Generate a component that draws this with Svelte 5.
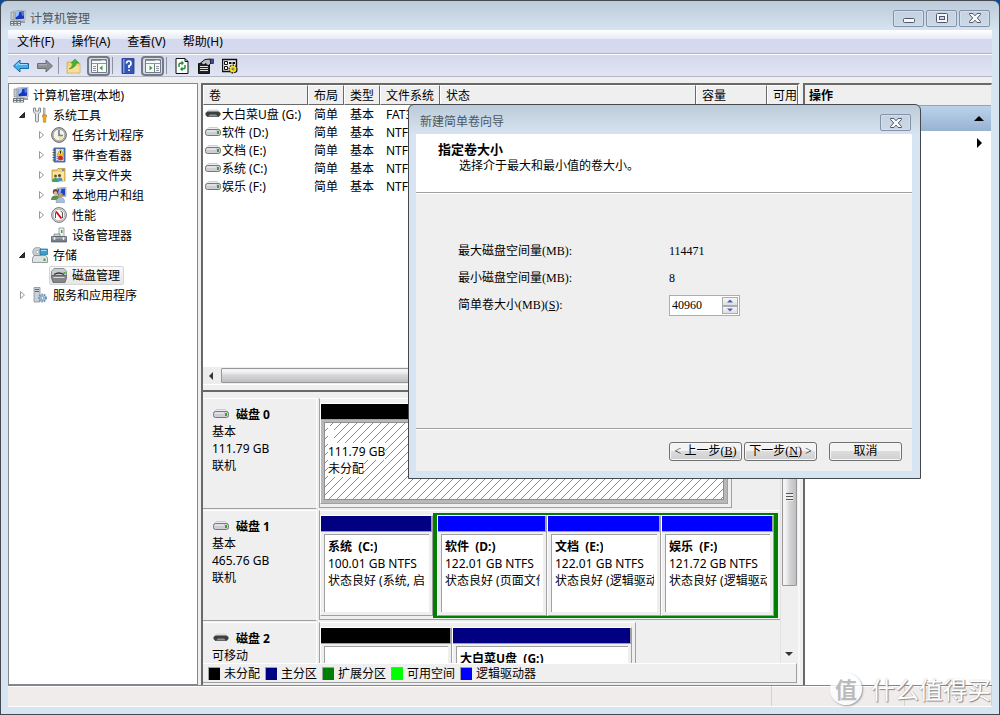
<script lang="ts">
	type TreeNode = {
		label: string;
		icon: string;
		level: number;
		state?: 'open' | 'closed';
		selected?: boolean;
	};

	type Partition = {
		kind: string;
		width: number;
		name?: string;
		size?: string;
		status?: string;
		selected?: boolean;
	};

	const menus = ['文件(F)', '操作(A)', '查看(V)', '帮助(H)'];

	const tree: TreeNode[] = [
		{ label: '计算机管理(本地)', icon: 'computer', level: 0 },
		{ label: '系统工具', icon: 'tools', level: 1, state: 'open' },
		{ label: '任务计划程序', icon: 'clock', level: 2, state: 'closed' },
		{ label: '事件查看器', icon: 'events', level: 2, state: 'closed' },
		{ label: '共享文件夹', icon: 'shared', level: 2, state: 'closed' },
		{ label: '本地用户和组', icon: 'users', level: 2, state: 'closed' },
		{ label: '性能', icon: 'gauge', level: 2, state: 'closed' },
		{ label: '设备管理器', icon: 'device', level: 2 },
		{ label: '存储', icon: 'storage', level: 1, state: 'open' },
		{ label: '磁盘管理', icon: 'disks', level: 2, selected: true },
		{ label: '服务和应用程序', icon: 'services', level: 1, state: 'closed' }
	];

	const columns = [
		{ label: '卷', key: 'name' },
		{ label: '布局', key: 'layout' },
		{ label: '类型', key: 'type' },
		{ label: '文件系统', key: 'fs' },
		{ label: '状态', key: 'status' },
		{ label: '容量', key: 'capacity' },
		{ label: '可用', key: 'free' }
	];

	const volumes = [
		{ name: '大白菜U盘 (G:)', icon: 'usb', fs: 'FAT32' },
		{ name: '软件 (D:)', icon: 'drive', fs: 'NTFS' },
		{ name: '文档 (E:)', icon: 'drive', fs: 'NTFS' },
		{ name: '系统 (C:)', icon: 'drive', fs: 'NTFS' },
		{ name: '娱乐 (F:)', icon: 'drive', fs: 'NTFS' }
	];

	const disk0: Partition[] = [
		{ kind: 'free', width: 408, size: '111.79 GB', status: '未分配', selected: true }
	];
	const disk1: Partition[] = [
		{ kind: 'primary', width: 113, name: '系统  (C:)', size: '100.01 GB NTFS', status: '状态良好 (系统, 启' }
	];
	const disk1Extended: Partition[] = [
		{ kind: 'logical', width: 110, name: '软件  (D:)', size: '122.01 GB NTFS', status: '状态良好 (页面文件' },
		{ kind: 'logical', width: 114, name: '文档  (E:)', size: '122.01 GB NTFS', status: '状态良好 (逻辑驱动' },
		{ kind: 'logical', width: 113, name: '娱乐  (F:)', size: '121.72 GB NTFS', status: '状态良好 (逻辑驱动' }
	];
	const disk2: Partition[] = [
		{ kind: 'free', width: 132 },
		{ kind: 'primary', width: 180, name: '大白菜U盘  (G:)' }
	];

	const disks = [
		{ name: '磁盘 0', icon: 'drive', lines: ['基本', '111.79 GB', '联机'], parts: disk0, extended: [] },
		{ name: '磁盘 1', icon: 'drive', lines: ['基本', '465.76 GB', '联机'], parts: disk1, extended: disk1Extended },
		{ name: '磁盘 2', icon: 'usb', lines: ['可移动'], parts: disk2, extended: [] }
	];

	const legend = [
		{ kind: 'free', label: '未分配' },
		{ kind: 'primary', label: '主分区' },
		{ kind: 'extended', label: '扩展分区' },
		{ kind: 'available', label: '可用空间' },
		{ kind: 'logical', label: '逻辑驱动器' }
	];

	let size = $state(40960);
	const min = 8;
	const max = 114471;

	function step(by: number) {
		size = Math.min(max, Math.max(min, Number(size) + by));
	}
</script>

{#snippet icon(name: string)}
	<svg class="icon" viewBox="0 0 16 16" aria-hidden="true">
		{#if name === 'computer'}
			<path d="M4 1l11-1v10l-11 1z" fill="#d5d8dc" stroke="#8d949c" stroke-width=".6" />
			<path d="M5.500 2l8.500-.8v7.500l-8.500.8z" fill="#1836b8" />
			<path d="M5.500 2l4-.4-1 4-3 2z" fill="#9cc0f5" />
			<path d="M11 1.500l3-.3v4l-2 1z" fill="#4f7ae0" />
			<path d="M1 2h3v8H1z" fill="#c3c8cd" stroke="#7c838b" stroke-width=".6" />
			<path d="M0 11h11v4.500H0z" fill="#70787f" />
			<path d="M1 12.500h2m1.500 0h2m1.500 0h2M1 14.500h2m1.500 0h2m1.500 0h2" stroke="#dfe5e9" />
			<path d="M11 11h4v2h-4z" fill="#9aa1a8" />
		{:else if name === 'tools'}
			<path d="M1.500 1v4l2 2v7.500q1.500 1.500 3 0V7l2-2V1L6.700 1v3H3.500V1z" fill="#dfe3e6" stroke="#6f767c" stroke-width=".8" />
			<path d="M11.500 1h1.500v7h-1.500z" fill="#d7dadd" stroke="#777" stroke-width=".6" />
			<path d="M10.500 8h4v2l-.8 1v4q-1.200 1-2.400 0v-4l-.8-1z" fill="#f0a818" stroke="#b87408" stroke-width=".6" />
		{:else if name === 'clock'}
			<circle cx="8" cy="8" r="7.400" fill="#b5b5b5" stroke="#6e6e6e" />
			<circle cx="8" cy="8" r="5.800" fill="#fbf3dc" stroke="#8e8e8e" stroke-width=".6" />
			<path d="M8 3v5.500h4" fill="none" stroke="#2e65a8" stroke-width="1.300" />
			<path d="M8 8.500h4L11 12l-3 .8z" fill="#edd18c" opacity=".7" />
		{:else if name === 'events'}
			<path d="M3 1h11v14H3z" fill="#5b84c4" stroke="#2d4f8c" stroke-width=".8" />
			<path d="M5 2h7.500v12H5z" fill="#dde6f5" />
			<path d="M5.500 9.500h2m-2 2h2m-2 2h2" stroke="#5b84c4" />
			<path d="M1.500 3h3m-3 2.500h3m-3 2.500h3m-3 2.500h3m-3 2.500h3" stroke="#555" />
			<path d="M9.500 2l3.500 6H6z" fill="#ffd52e" stroke="#a67c00" stroke-width=".5" />
			<path d="M9.500 4v2.500" stroke="#222" />
			<circle cx="9.500" cy="11" r="2.500" fill="#d22c1e" />
		{:else if name === 'shared'}
			<path d="M1 3h5l1-1.500h7V14H1z" fill="#f1cf6d" stroke="#b58b28" stroke-width=".7" />
			<path d="M2 5h11v9H2z" fill="#fbe6a0" />
			<path d="M11 3h2.500" stroke="#3b82c4" stroke-width="1.500" />
			<circle cx="4.500" cy="9" r="1.500" fill="#7b5130" />
			<circle cx="8.500" cy="8.500" r="1.500" fill="#5e432d" />
			<path d="M1 15q0-4 3.500-4t3.500 4z" fill="#37a46a" />
			<path d="M6 14q0-3.500 2.800-3.500t2.700 3.500z" fill="#5090c8" />
		{:else if name === 'users'}
			<path d="M6 1l9-.6v9l-9 .6z" fill="#c8ced6" stroke="#8b929a" stroke-width=".6" />
			<path d="M7 2l7-.4v6.800l-7 .4z" fill="#2146c4" />
			<path d="M8 2l2.500-.1-1 4L7 7z" fill="#8fb4f3" />
			<circle cx="4.500" cy="4.800" r="2.700" fill="#7a4b27" />
			<circle cx="4.500" cy="5.800" r="1.600" fill="#e8b98c" />
			<path d="M0 13q0-4.500 4.500-4.500T9 13z" fill="#5b8f4c" />
			<circle cx="9.500" cy="8" r="2.300" fill="#c99a58" />
			<path d="M5 15.500q0-5 4.300-5t4.200 5z" fill="#a9bfd8" stroke="#6782a2" stroke-width=".5" />
		{:else if name === 'gauge'}
			<circle cx="8" cy="8" r="7.400" fill="#d9d9d9" stroke="#777" />
			<circle cx="8" cy="8" r="5.700" fill="#fff" stroke="#999" stroke-width=".6" />
			<path d="M4.500 11V5.500M11.500 11V5.500L9.500 4" fill="none" stroke="#555" />
			<path d="M5 4.500l5.500 7" stroke="#d01515" stroke-width="2" />
		{:else if name === 'device'}
			<path d="M8 1h5v9H8z" fill="#edf1f2" stroke="#7c8386" stroke-width=".7" />
			<path d="M10 3h1.500v3H10z" fill="#43a047" />
			<path d="M3 7h6v3H3z" fill="#cfd5d9" stroke="#737b80" stroke-width=".7" />
			<path d="M.5 9.500h15V15H.5z" fill="#758088" stroke="#4b545a" stroke-width=".7" />
			<path d="M1 11h14" stroke="#b9c3c9" />
			<path d="M3.500 10v3m9-3v3" stroke="#e8edf0" stroke-width="1.500" />
		{:else if name === 'storage'}
			<circle cx="5.500" cy="5" r="4.800" fill="#c7cdd1" stroke="#7d858a" stroke-width=".6" />
			<circle cx="5.500" cy="5" r="1.500" fill="#fff" stroke="#8c9499" stroke-width=".6" />
			<path d="M8 2h7.500v5.500H8z" fill="#35a3d4" stroke="#1d6c94" stroke-width=".7" />
			<path d="M9 3.500h5.500" stroke="#a6def5" />
			<path d="M2 8.500h12l1.500 2.500v4.500H.5V11z" fill="#dfe2e4" stroke="#72797d" stroke-width=".7" />
			<path d="M11.500 11.500h2v2.500h-2z" fill="#3fae2a" />
		{:else if name === 'disks'}
			<path d="M3 1.500h10l2.500 3v4H.5v-4z" fill="#c9ccce" stroke="#6b6f72" stroke-width=".7" />
			<path d="M3 7.500q5-3 10 0" fill="none" stroke="#333" stroke-width="1.300" />
			<path d="M.5 8.500h15V11L14 15.500H2L.5 11z" fill="#838789" stroke="#54585a" stroke-width=".7" />
			<path d="M2.500 10.500h11" stroke="#d5d8da" />
			<path d="M12.500 5h2v1.800h-2z" fill="#3fae2a" />
		{:else if name === 'services'}
			<path d="M2 .5h6v14.500H2z" fill="#c9d2d6" stroke="#798489" stroke-width=".7" />
			<path d="M3 2.500h4M3 4.500h4" stroke="#3d7a60" />
			<circle cx="10.500" cy="11" r="3.500" fill="#a8c3de" stroke="#7193b5" stroke-width="2" stroke-dasharray="1.500 1" />
			<circle cx="10.500" cy="11" r="1.400" fill="#fff" stroke="#56789c" stroke-width=".6" />
		{:else if name === 'drive'}
			<path d="M4 3.500h8L15 6H1z" fill="#eceef0" stroke="#b4b4b8" stroke-width=".6" />
			<rect x=".5" y="5.500" width="15" height="6" rx="2" fill="#cdced3" stroke="#77777d" />
			<path d="M2 7h9" stroke="#f5f5f7" />
			<path d="M12 7h2v3h-2z" fill="#38a325" />
		{:else if name === 'usb'}
			<path d="M3.500 3.500h9l3 3H.5z" fill="#d9dbdc" />
			<path d="M.5 7l2-1.500h11l2 1.500v2l-2 2h-11l-2-2z" fill="#3c3f41" />
			<path d="M3 10.500L5 8.500h6l2 2z" fill="#8d9092" />
		{:else if name === 'back'}
			<path d="M.5 8L7 2v3.500h8.500v5H7V14z" fill="#3fb0ea" stroke="#1668a8" />
			<path d="M3 7.500L6 5v1.500h8" fill="none" stroke="#a5e0fa" />
		{:else if name === 'forward'}
			<path d="M15.500 8L9 2v3.500H.5v5H9V14z" fill="#8d8f92" stroke="#6d6f72" />
			<path d="M1.500 6.800h8.500" stroke="#b9bbbd" />
		{:else if name === 'up'}
			<path d="M1 4h5l1.500 1.500H14V15H1z" fill="#f0d27a" stroke="#c5a552" stroke-width=".7" />
			<path d="M2 8h11.500v6.500H2z" fill="#f7df98" />
			<path d="M3 11q3.500-2 4-6H5L9 1l4 4h-2.500Q9.500 10 3 11z" fill="#45b52d" stroke="#2b8318" stroke-width=".5" />
		{:else if name === 'help'}
			<path d="M2 .5h12v15H2z" fill="#3556b4" stroke="#1d3683" stroke-width=".8" />
			<path d="M3 1h1.500v14H3z" fill="#7f9be0" />
			<path d="M6.500 5.500q.2-2.500 2.300-2.500t2.200 2.200-2 2.600V10" fill="none" stroke="#fff" stroke-width="1.700" />
			<path d="M8.200 11.500h1.700v1.600H8.200z" fill="#fff" />
		{:else if name === 'pane-left' || name === 'pane-right'}
			<path d="M.5 1.500h15v13H.5z" fill="#f7f8fa" stroke="#757b86" />
			<path d="M1 2.500h14M1 5.500h14" stroke="#8f96a3" />
			<path d="M10.500 2.500h1m1 0h1" stroke="#fff" />
			{#if name === 'pane-left'}
				<path d="M6.500 6v8" stroke="#757b86" />
				<path d="M2 8.500h3m-3 2h3m-3 2h3" stroke="#8891a0" />
				<path d="M11.500 7.500v5L8.500 10z" fill="#3aa335" />
			{:else}
				<path d="M9.500 6v8" stroke="#757b86" />
				<path d="M11 8.500h3m-3 2h3m-3 2h3" stroke="#8891a0" />
				<path d="M4.500 7.500v5l3-2.500z" fill="#3aa335" />
			{/if}
		{:else if name === 'refresh'}
			<path d="M2 .5h9L14 3.500v12H2z" fill="#fff" stroke="#111" />
			<path d="M11 .5v3h3" fill="none" stroke="#111" />
			<path d="M5 9V6.500q0-1.500 3-1.500M11 7v2.500q0 1.500-3 1.500" fill="none" stroke="#169030" stroke-width="1.400" />
			<path d="M7.500 2.500L10 5 7.500 7.500zM8.500 8.500L6 11l2.500 2.500z" fill="#169030" />
		{:else if name === 'properties'}
			<path d="M.5 5.500h11v10H.5z" fill="#222" stroke="#111" />
			<path d="M2 8.500h8m-8 2h8m-8 2h8" stroke="#ddd" />
			<path d="M2.500 5L7 1.500l5-.5 1 4-3 3-2-2.500-2 1.500z" fill="#bbb" stroke="#111" />
			<path d="M12 1h3.500v4.500H13z" fill="#3b4fa5" stroke="#111" stroke-width=".6" />
		{:else if name === 'settings'}
			<path d="M.5 1.500h14v12H.5z" fill="#eee" stroke="#111" stroke-width="1.400" />
			<path d="M2.500 3.500h3v3h-3zM2.500 8.500h3v3h-3z" fill="#fff" stroke="#111" />
			<path d="M7 5h2.500m1 0h2.500" stroke="#111" stroke-width="2" />
			<circle cx="11" cy="11" r="3.500" fill="#ffe93a" stroke="#111" stroke-width="2" stroke-dasharray="1.600 1" />
			<circle cx="11" cy="11" r="3.300" fill="#f8e02a" />
			<circle cx="11" cy="11" r="1" fill="#fff" stroke="#111" stroke-width=".6" />
		{/if}
	</svg>
{/snippet}

{#snippet closeGlyph()}
	<svg viewBox="0 0 12 10" aria-hidden="true">
		<path
			d="M.5.500h3.500L6 2.800 8 .500h3.500v1L8.300 5l3.200 3.500v1H8L6 7.200 4 9.500H.5v-1L3.700 5 .5 1.500z"
			fill="#f6f8fa"
			stroke="#52566a"
		/>
	</svg>
{/snippet}

{#snippet partition(part: Partition)}
	<div class="part" style="flex-basis: {part.width}px">
		<div class="bar {part.kind}"></div>
		<div class="part-body" class:selected={part.selected}>
			<div class="part-text">
				{#if part.selected}
					<svg class="hatch" aria-hidden="true">
						<defs>
							<pattern id="hatch" width="8" height="8" patternUnits="userSpaceOnUse">
								<path
									d="M7 0h1v1h-1zM6 1h1v1h-1zM5 2h1v1h-1zM4 3h1v1h-1zM3 4h1v1h-1zM2 5h1v1h-1zM1 6h1v1h-1zM0 7h1v1h-1z"
									fill="#8c8c8c"
								/>
							</pattern>
						</defs>
						<rect width="100%" height="100%" fill="url(#hatch)" />
					</svg>
				{/if}
				<strong>{part.name ?? '  '}</strong>
				<span>{part.size}</span>
				<span>{part.status}</span>
			</div>
		</div>
	</div>
{/snippet}

<div class="window">
	<header class="titlebar">
		{@render icon('computer')}
		<h1>计算机管理</h1>
		<div class="controls">
			<button aria-label="最小化">
				<svg viewBox="0 0 12 10" aria-hidden="true">
					<rect x=".5" y="5.500" width="11" height="4" rx="1" fill="#f6f8fa" stroke="#52566a" />
				</svg>
			</button>
			<button aria-label="最大化">
				<svg viewBox="0 0 12 10" aria-hidden="true">
					<rect x=".5" y=".5" width="11" height="9" rx="1" fill="#f6f8fa" stroke="#52566a" />
					<rect x="3.500" y="3.500" width="5" height="3" fill="#c9d6e4" stroke="#52566a" />
				</svg>
			</button>
			<button aria-label="关闭">{@render closeGlyph()}</button>
		</div>
	</header>

	<div class="client">
		<nav class="menubar">
			{#each menus as menu}
				<button>{menu}</button>
			{/each}
		</nav>

		<div class="toolbar">
			<button aria-label="后退">{@render icon('back')}</button>
			<button aria-label="前进">{@render icon('forward')}</button>
			<i></i>
			<button aria-label="向上">{@render icon('up')}</button>
			<button class="pressed" aria-label="控制台树">{@render icon('pane-left')}</button>
			<i></i>
			<button aria-label="帮助">{@render icon('help')}</button>
			<button class="pressed" aria-label="操作窗格">{@render icon('pane-right')}</button>
			<i></i>
			<button aria-label="刷新">{@render icon('refresh')}</button>
			<button aria-label="属性">{@render icon('properties')}</button>
			<button aria-label="设置">{@render icon('settings')}</button>
		</div>

		<main class="workspace">
			<ul class="tree">
				{#each tree as node}
					<li class="level-{node.level}">
						{#if node.level > 0}
							<svg class="arrow" viewBox="0 0 8 8" aria-hidden="true">
								{#if node.state === 'open'}
									<path d="M6.500 1.500v5h-5z" fill="#333" stroke="#222" />
								{:else if node.state === 'closed'}
									<path d="M2.500.500v7L6.500 4z" fill="#fff" stroke="#999" />
								{/if}
							</svg>
						{/if}
						<button class="node" class:selected={node.selected}>
							{@render icon(node.icon)}
							{node.label}
						</button>
					</li>
				{/each}
			</ul>

			<section class="center">
				<div class="volumes">
					<div class="list">
						<table>
							<thead>
								<tr>
									{#each columns as column}
										<th class="col-{column.key}">{column.label}</th>
									{/each}
								</tr>
							</thead>
							<tbody>
								{#each volumes as volume}
									<tr>
										<td><span class="volume">{@render icon(volume.icon)}{volume.name}</span></td>
										<td>简单</td>
										<td>基本</td>
										<td>{volume.fs}</td>
										<td></td>
										<td></td>
										<td></td>
									</tr>
								{/each}
							</tbody>
						</table>
					</div>
					<div class="hscroll">
						<svg viewBox="0 0 8 8" aria-hidden="true"><path d="M6 0v8L2 4z" fill="#333" /></svg>
						<div class="thumb"></div>
					</div>
				</div>

				<div class="splitter"></div>

				<div class="map">
					<div class="disks">
						{#each disks as disk}
							<div class="disk">
								<div class="disk-label">
									<strong>{@render icon(disk.icon)}{disk.name}</strong>
									{#each disk.lines as line}
										<span>{line}</span>
									{/each}
								</div>
								<div class="graph" class:full={disk.extended.length}>
									{#each disk.parts as part}
										{@render partition(part)}
									{/each}
									{#if disk.extended.length}
										<div class="extended-group">
											{#each disk.extended as part}
												{@render partition(part)}
											{/each}
										</div>
									{/if}
								</div>
							</div>
						{/each}
					</div>
					<div class="vscroll">
						<div class="thumb"><i></i></div>
						<svg viewBox="0 0 8 8" aria-hidden="true"><path d="M0 2h8L4 6z" fill="#333" /></svg>
					</div>
				</div>

				<div class="legend">
					{#each legend as item}
						<span><i class={item.kind}></i>{item.label}</span>
					{/each}
				</div>
			</section>

			<aside class="actions">
				<h2>操作</h2>
				<button class="group" aria-label="磁盘管理">
					<svg viewBox="0 0 10 10" aria-hidden="true"><path d="M0 7h10L5 2z" /></svg>
				</button>
				<button class="more" aria-label="更多操作">
					<svg viewBox="0 0 10 10" aria-hidden="true"><path d="M3 0v10l5-5z" /></svg>
				</button>
			</aside>
		</main>

		<footer class="statusbar"><span></span><span></span><span></span></footer>
	</div>

	<div class="dialog" role="dialog" aria-labelledby="wizard-title">
		<header>
			<h2 id="wizard-title">新建简单卷向导</h2>
			<button class="close" aria-label="关闭">{@render closeGlyph()}</button>
		</header>
		<div class="banner">
			<h3>指定卷大小</h3>
			<p>选择介于最大和最小值的卷大小。</p>
		</div>
		<div class="fields">
			<span>最大磁盘空间量(MB):</span>
			<span>{max}</span>
			<span>最小磁盘空间量(MB):</span>
			<span>{min}</span>
			<label for="volume-size">简单卷大小(MB)(<u>S</u>):</label>
			<div class="spinner">
				<input id="volume-size" type="text" bind:value={size} />
				<div>
					<button aria-label="增加" onclick={() => step(1)}>
						<svg viewBox="0 0 6 4" aria-hidden="true"><path d="M0 3.500h6L3 .5z" /></svg>
					</button>
					<button aria-label="减少" onclick={() => step(-1)}>
						<svg viewBox="0 0 6 4" aria-hidden="true"><path d="M0 .5h6L3 3.500z" /></svg>
					</button>
				</div>
			</div>
		</div>
		<div class="buttons">
			<button>&lt; 上一步(<u>B</u>)</button>
			<button>下一步(<u>N</u>) &gt;</button>
			<button class="cancel">取消</button>
		</div>
	</div>

	<div class="watermark"><b>值</b>什么值得买</div>
</div>

<style>
	:global(body) {
		margin: 0;
		background: #0a4a9c;
	}

	.window,
	.window * {
		box-sizing: border-box;
	}

	.window {
		position: relative;
		display: flex;
		flex-direction: column;
		height: 100vh;
		padding: 0 7px 7px;
		overflow: hidden;
		border: 1px solid #45484d;
		border-radius: 7px 7px 0 0;
		background: linear-gradient(#bccbd9, #d7e4f1 30px);
		font: 12px/17px 'Noto Sans', 'Noto Sans CJK SC', sans-serif;
		color: #000;
	}

	h1,
	h2,
	h3,
	p,
	ul {
		margin: 0;
		padding: 0;
		font-size: 12px;
		list-style: none;
	}

	button {
		display: flex;
		align-items: center;
		justify-content: center;
		padding: 0;
		border: 0;
		background: none;
		font: inherit;
		color: inherit;
		white-space: nowrap;
	}

	.icon {
		flex: none;
		width: 16px;
		height: 16px;
	}

	/* title bar */
	.titlebar {
		display: flex;
		align-items: center;
		gap: 4px;
		flex: none;
		height: 29px;
		padding: 5px 2px 0;
		color: #4e565f;
	}

	.titlebar h1 {
		flex: 1;
		font-weight: normal;
	}

	.controls {
		display: flex;
		gap: 2px;
	}

	.controls button,
	.close {
		width: 31px;
		height: 17px;
		border: 1px solid #8591ab;
		border-radius: 2px;
		background: linear-gradient(#c4d2e1, #cbd8e6);
		box-shadow: inset 0 0 0 1px #d3dfeb;
	}

	.controls svg,
	.close svg {
		width: 12px;
		height: 10px;
	}

	/* client area */
	.client {
		display: flex;
		flex: 1;
		flex-direction: column;
		min-height: 0;
		background: #efefef;
	}

	.menubar {
		display: flex;
		gap: 17px;
		flex: none;
		height: 24px;
		padding: 0 9px;
		border-bottom: 1px solid #b0b4bd;
		background: linear-gradient(#fff, #e6eaf5 9px, #d4d9ed 9px);
	}

	.toolbar {
		display: flex;
		align-items: center;
		gap: 2px;
		flex: none;
		height: 23px;
		padding: 0 2px;
		border-top: 1px solid #fff;
		border-bottom: 1px solid #b4b8c6;
		background: linear-gradient(#d3d8ec, #e1e5f3);
	}

	.toolbar button {
		width: 22px;
		height: 20px;
	}

	.toolbar .pressed {
		width: 23px;
		border: 2px solid #737a87;
		border-radius: 4px;
		background: #d9dde6;
	}

	.toolbar i {
		width: 1px;
		height: 17px;
		margin-right: 2px;
		background: #8d93a0;
	}

	.workspace {
		display: grid;
		grid-template-columns: 190px minmax(0, 1fr) 189px;
		gap: 3px;
		flex: 1;
		min-height: 0;
		padding-top: 6px;
	}

	/* console tree */
	.tree {
		padding: 1px 4px;
		border: 1px solid #828790;
		background: #fff;
	}

	.tree li {
		display: flex;
		align-items: center;
		gap: 4px;
		height: 20px;
	}

	.level-1 {
		padding-left: 5px;
	}

	.tree .level-2 {
		padding-left: 24px;
	}

	.arrow {
		width: 8px;
		height: 8px;
	}

	.node {
		gap: 5px;
		height: 19px;
		padding: 0 3px 0 1px;
		border: 1px solid transparent;
		border-radius: 2px;
	}

	.level-0 .node {
		gap: 4px;
		padding: 0;
		border-left: 0;
	}

	.node.selected {
		border-color: #d6d6d6;
		background: linear-gradient(#f9f9f9, #e6e6e6);
	}

	/* volume list */
	.center {
		display: flex;
		flex-direction: column;
		min-width: 0;
		min-height: 0;
		padding-bottom: 2px;
		border: solid #696969;
		border-width: 2px 2px 0;
		border-right-color: #f8f8f8;
	}

	.volumes {
		display: flex;
		flex: 0 0 50%;
		flex-direction: column;
		min-height: 0;
	}

	.list {
		flex: 1;
		overflow: hidden;
		background: #fff;
	}

	table {
		width: 100%;
		table-layout: fixed;
		border-collapse: separate;
		border-spacing: 0;
	}

	th {
		height: 20px;
		padding: 0 0 0 5px;
		overflow: hidden;
		border: solid #696969;
		border-width: 1px;
		border-top-color: #fff;
		border-left-color: #fff;
		background: #efefef;
		font-weight: normal;
		text-align: left;
		white-space: nowrap;
	}

	.col-name {
		width: 105px;
	}

	.col-layout,
	.col-type {
		width: 36px;
	}

	.col-fs {
		width: 60px;
	}

	.col-capacity {
		width: 71px;
	}

	.col-free {
		width: 31px;
	}

	td {
		height: 18px;
		padding: 0 0 0 6px;
		white-space: nowrap;
	}

	td:first-child {
		padding-left: 2px;
	}

	.volume {
		display: flex;
		gap: 1px;
	}

	.hscroll {
		display: flex;
		align-items: center;
		flex: none;
		height: 17px;
		background: #ededed;
	}

	.hscroll svg {
		width: 8px;
		height: 8px;
		margin: 0 6px 0 4px;
	}

	.hscroll .thumb {
		width: 70%;
		height: 15px;
		border: 1px solid #979797;
		border-radius: 1px;
		background: linear-gradient(#f3f3f3 20%, #d6d6d8 50%, #bfbfc3);
	}

	.splitter {
		flex: none;
		height: 8px;
		border-top: 1px solid #fff;
		border-bottom: 2px solid #696969;
		background: #efefef;
	}

	/* disk map */
	.map {
		display: flex;
		flex: 1;
		min-height: 0;
		padding-right: 1px;
	}

	.disks {
		flex: 1;
		min-width: 0;
		padding-top: 6px;
		overflow: hidden;
	}

	.disk {
		display: flex;
		height: 111px;
		margin-bottom: 1px;
	}

	.disk-label {
		flex: 0 0 114px;
		padding: 7px 0 0 9px;
		border: solid #fff;
		border-width: 1px 1px 1px 0;
		border-bottom-color: #a0a0a0;
	}

	.disk-label strong {
		display: flex;
		gap: 7px;
	}

	.disk-label .icon {
		margin-left: 1px;
	}

	.disk-label span {
		display: block;
	}

	.graph {
		display: flex;
		align-items: flex-start;
		height: 110px;
		margin-left: 2px;
		padding: 2px 3px 0 0;
		border: 1px solid #a0a0a0;
		border-top-color: #fff;
	}

	.graph.full {
		flex: 1;
		border-right: 0;
	}

	.graph > .part {
		margin-top: 2px;
	}

	.part {
		display: flex;
		flex: none;
		flex-direction: column;
		height: 101px;
		min-width: 0;
		border: solid #fff;
		border-width: 1px;
		border-right-color: #a0a0a0;
		border-bottom-color: #a0a0a0;
	}

	.bar {
		flex: none;
		height: 16px;
		border-right: 1px solid #a0a0a0;
		border-bottom: 1px solid #a0a0a0;
	}

	.part-body {
		flex: 1;
		min-height: 0;
		padding: 2px 3px 3px;
	}

	.part-body.selected {
		background: #b8b8b8;
	}

	.part-text {
		position: relative;
		height: 100%;
		padding: 3px;
		overflow: hidden;
		border: solid #a0a0a0;
		border-width: 1px 0 0 1px;
		background: #fff;
	}

	.selected .part-text {
		border: 1px solid #909090;
	}

	.part-text strong,
	.part-text span {
		position: relative;
		display: block;
		width: fit-content;
		max-width: 100%;
		min-height: 17px;
		overflow: hidden;
		background: #fff;
		white-space: pre;
	}

	.hatch {
		position: absolute;
		inset: 0;
		width: 100%;
		height: 100%;
	}

	.extended-group {
		display: flex;
		border: solid #008000;
		border-width: 2px 4px;
	}

	.free {
		background: #000;
	}

	.primary {
		background: #000080;
	}

	.extended {
		background: #008000;
	}

	.available {
		background: #0f0;
	}

	.logical {
		background: #00f;
	}

	.vscroll {
		display: flex;
		flex: 0 0 17px;
		flex-direction: column;
		align-items: center;
		justify-content: space-between;
		padding: 16px 0 5px;
		border-left: 1px solid #e2e2e2;
	}

	.vscroll svg {
		width: 8px;
		height: 8px;
	}

	.vscroll .thumb {
		display: grid;
		place-items: center;
		width: 15px;
		height: 178px;
		border: 1px solid #979797;
		border-radius: 1px;
		background: linear-gradient(90deg, #f3f3f3 20%, #d6d6d8 50%, #bfbfc3);
	}

	.vscroll i {
		width: 7px;
		height: 8px;
		background: repeating-linear-gradient(#555 0 1px, #eee 1px 3px);
	}

	.legend {
		display: flex;
		gap: 5px;
		flex: none;
		height: 20px;
		margin-right: 1px;
		padding: 1px 5px;
		border: solid #a0a0a0;
		border-width: 1px 1px 1px 0;
		border-top-color: #fff;
	}

	.legend span {
		display: flex;
		align-items: center;
		gap: 4px;
	}

	.legend i {
		width: 12px;
		height: 13px;
		border: 1px solid #a0a0a0;
		border-width: 1px 0 0 1px;
	}

	/* actions pane */
	.actions {
		border: solid #696969;
		border-width: 2px 1px 0 2px;
		border-right-color: #e3e3e3;
		background: #fff;
	}

	.actions h2 {
		height: 21px;
		padding: 2px 4px;
		border-bottom: 1px solid #a0a0a0;
		background: #efefef;
	}

	.actions button {
		justify-content: flex-end;
		width: 100%;
		height: 25px;
		padding-right: 7px;
	}

	.actions .group {
		background: linear-gradient(#bad3ec, #98b3d1);
	}

	.actions .more {
		height: 23px;
	}

	.actions svg {
		width: 10px;
		height: 10px;
	}

	.statusbar {
		display: flex;
		flex: none;
		height: 22px;
		border-top: 1px solid #82868c;
		border-bottom: 1px solid #fff;
		background: #f0eceb;
		box-shadow: inset 0 1px #fff;
	}

	.statusbar span {
		flex: 0 0 133px;
		border-right: 1px solid #d5d1d0;
	}

	.statusbar span:first-child {
		flex: 1;
	}

	.statusbar span:last-child {
		flex-basis: 87px;
	}

	/* wizard window */
	.dialog {
		position: absolute;
		top: 103px;
		left: 407px;
		width: 513px;
		padding: 0 8px 7px 7px;
		border: 1px solid #45484d;
		border-radius: 6px 6px 0 0;
		background: linear-gradient(#bccbd9, #d7e4f1 30px);
		font-family: 'Liberation Serif', 'Noto Sans CJK SC', serif;
	}

	.dialog header {
		display: flex;
		align-items: center;
		justify-content: space-between;
		height: 29px;
		padding: 6px 1px 0 4px;
		color: #4e565f;
	}

	.dialog h2 {
		font-weight: normal;
	}

	.banner {
		height: 59px;
		padding: 8px 22px;
		border-bottom: 1px solid #a0a0a0;
		background: #fff;
		line-height: 16px;
	}

	.banner h3 {
		font-size: 13px;
	}

	.banner p {
		padding-left: 21px;
	}

	.fields {
		display: grid;
		grid-template-columns: 211px 1fr;
		grid-auto-rows: 27px;
		align-items: center;
		height: 235px;
		padding: 45px 42px 0;
		background: #efefef;
		box-shadow: inset 0 1px #fff;
	}

	.spinner {
		display: flex;
		width: 71px;
		height: 21px;
		padding: 1px;
		border: 1px solid #abadb3;
		background: #fff;
	}

	.spinner input {
		flex: 1;
		min-width: 0;
		padding: 0 1px;
		border: 0;
		outline: 0;
		font: inherit;
	}

	.spinner div {
		display: grid;
		grid-template-rows: 1fr 1fr;
		width: 16px;
	}

	.spinner button {
		border: 1px solid #a9abb2;
		background: linear-gradient(#f6f6f6, #dedede);
	}

	.spinner svg {
		width: 6px;
		height: 4px;
		fill: #4562b5;
	}

	.buttons {
		display: flex;
		justify-content: flex-end;
		gap: 2px;
		height: 43px;
		padding: 13px 10px 0;
		border-top: 1px solid #a0a0a0;
		background: #efefef;
		box-shadow: inset 0 1px #fff;
	}

	.buttons button {
		width: 73px;
		height: 19px;
		border: 1px solid #707070;
		border-radius: 3px;
		background: linear-gradient(#f3f3f3 45%, #dcdcdc 50%, #cfcfcf);
		box-shadow: inset 0 0 0 1px #f8f8f8;
		white-space: pre;
	}

	.buttons .cancel {
		margin-left: 10px;
	}

	.watermark {
		position: absolute;
		right: 8px;
		bottom: 9px;
		display: flex;
		align-items: center;
		gap: 9px;
		font: 24px/32px 'Noto Sans CJK SC', sans-serif;
		color: #fff;
		text-shadow: 1px 1px 1px #888, 0 0 1px #aaa;
	}

	.watermark b {
		width: 32px;
		height: 32px;
		border-radius: 50%;
		background: #fffc;
		box-shadow: 1px 1px 2px #999;
		font-size: 22px;
		line-height: 31px;
		text-align: center;
		text-shadow: none;
		color: #bbb;
	}
</style>
